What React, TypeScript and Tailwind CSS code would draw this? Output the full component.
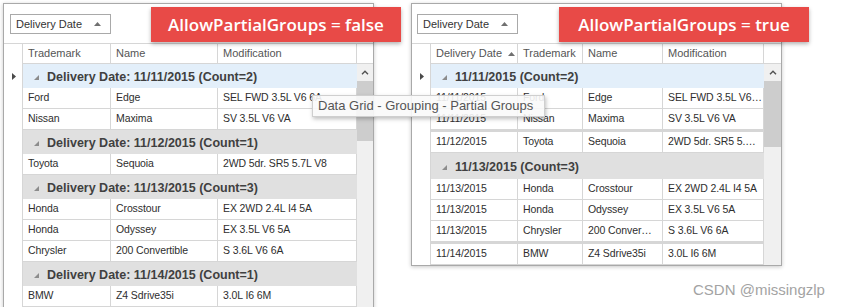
import React from 'react'

type Row = { g?: string; cells?: string[]; focus?: boolean; thick?: boolean; tall?: boolean }

const leftRows: Row[] = [
  { g: 'Delivery Date: 11/11/2015 (Count=2)', focus: true },
  { cells: ['Ford', 'Edge', 'SEL FWD 3.5L V6 6A'] },
  { cells: ['Nissan', 'Maxima', 'SV 3.5L V6 VA'] },
  { g: 'Delivery Date: 11/12/2015 (Count=1)' },
  { cells: ['Toyota', 'Sequoia', '2WD 5dr. SR5 5.7L V8'] },
  { g: 'Delivery Date: 11/13/2015 (Count=3)' },
  { cells: ['Honda', 'Crosstour', 'EX 2WD 2.4L I4 5A'] },
  { cells: ['Honda', 'Odyssey', 'EX 3.5L V6 5A'] },
  { cells: ['Chrysler', '200 Convertible', 'S 3.6L V6 6A'] },
  { g: 'Delivery Date: 11/14/2015 (Count=1)' },
  { cells: ['BMW', 'Z4 Sdrive35i', '3.0L I6 6M'] },
]

const rightRows: Row[] = [
  { g: '11/11/2015 (Count=2)', focus: true },
  { cells: ['11/11/2015', 'Ford', 'Edge', 'SEL FWD 3.5L V6…'] },
  { cells: ['11/11/2015', 'Nissan', 'Maxima', 'SV 3.5L V6 VA'], thick: true },
  { cells: ['11/12/2015', 'Toyota', 'Sequoia', '2WD 5dr. SR5 5.…'] },
  { g: '11/13/2015 (Count=3)', tall: true },
  { cells: ['11/13/2015', 'Honda', 'Crosstour', 'EX 2WD 2.4L I4 5A'] },
  { cells: ['11/13/2015', 'Honda', 'Odyssey', 'EX 3.5L V6 5A'] },
  { cells: ['11/13/2015', 'Chrysler', '200 Conver…', 'S 3.6L V6 6A'], thick: true },
  { cells: ['11/14/2015', 'BMW', 'Z4 Sdrive35i', '3.0L I6 6M'] },
]

const UpTri = () => (
  <svg width="7" height="4" viewBox="0 0 7 4"><polygon points="0,4 3.5,0 7,4" fill="#707070" /></svg>
)

function Grid({ headers, widths, rows, sortFirst, thumb, scrollW, panelCls, ddPad }: {
  headers: string[]; widths: string[]; rows: Row[]; sortFirst?: boolean
  thumb: string; scrollW: string; panelCls: string; ddPad: string
}) {
  return (
    <div className={`flex flex-col border border-[#a9a9a9] bg-white shadow-[0_1px_4px_rgba(0,0,0,0.22)] w-[371px] shrink-0 ${panelCls}`}>
      {/* group panel */}
      <div className={`h-[40px] border-b border-[#d6d6d6] pt-[10px] ${ddPad}`}>
        <div className="w-[101px] h-[20px] border border-[#a9a9a9] flex items-center pl-[5px] pr-[9px] text-[11px] text-[#333]">
          <span>Delivery Date</span>
          <span className="ml-auto"><UpTri /></span>
        </div>
      </div>

      {/* column headers */}
      <div className="flex h-[20px]">
        <div className="w-[19px] border-r border-[#d6d6d6]" />
        <div className="flex flex-1 border-b border-[#d6d6d6]">
          {headers.map((h, i) => (
            <div key={h} className={`${widths[i]} border-r border-[#d6d6d6] pl-[5px] flex items-center text-[11px] text-[#555] whitespace-nowrap`}>
              {h}
              {sortFirst && i === 0 && <span className="ml-[6px] mt-[1px]"><UpTri /></span>}
            </div>
          ))}
          <div className="flex-1" />
        </div>
      </div>

      {/* body */}
      <div className="flex flex-1 min-h-0 overflow-hidden">
        <div className="w-[19px] border-r border-[#d6d6d6] shrink-0">
          <div className="h-[24px] flex items-center justify-center pl-[1px]">
            <svg width="4" height="7" viewBox="0 0 4 7"><polygon points="0,0 4,3.5 0,7" fill="#4a4a4a" /></svg>
          </div>
        </div>
        <div className="flex flex-col">
          {rows.map((r, i) =>
            r.g ? (
              <div key={i} className={`flex items-center pl-[11px] shrink-0 ${r.tall ? 'h-[26px]' : 'h-[24px]'} ${r.focus ? 'bg-[#e3effa]' : 'bg-[#e0e0e0]'}`}>
                <svg width="5" height="5" viewBox="0 0 5 5" className="mt-[2px]"><polygon points="5,0 5,5 0,5" fill="#8c8c8c" /></svg>
                <span className="ml-[8px] pt-[2px] font-bold text-[12.5px] text-[#404040] whitespace-nowrap">{r.g}</span>
              </div>
            ) : (
              <div key={i} className={`flex shrink-0 ${r.thick ? 'h-[23px] border-b-[3px]' : 'h-[21px] border-b'} border-[#d6d6d6]`}>
                {r.cells!.map((c, j) => (
                  <div key={j} className={`${widths[j]} border-r border-[#d6d6d6] pl-[5px] flex items-center text-[10.5px] tracking-[-0.1px] text-[#2e2e2e] whitespace-nowrap overflow-hidden`}>
                    {c}
                  </div>
                ))}
              </div>
            )
          )}
        </div>
        <div className={`${scrollW} flex-1 bg-[#f0f0f0] flex flex-col`}>
          <div className="h-[17px] flex items-center justify-center">
            <svg width="8" height="5" viewBox="0 0 8 5"><path d="M1 4.3 L4 1.3 L7 4.3" stroke="#505050" strokeWidth="1.4" fill="none" /></svg>
          </div>
          <div className={`${thumb} bg-[#cdcdcd]`} />
        </div>
      </div>
    </div>
  )
}

function Banner({ text, cls }: { text: string; cls: string }) {
  return (
    <div className={`absolute top-[7px] w-[250px] h-[35px] bg-[#e84a47] shadow-[0_2px_4px_rgba(0,0,0,0.3)] flex items-center justify-center font-['Open_Sans',sans-serif] font-semibold text-[17px] text-white ${cls}`}>
      {text}
    </div>
  )
}

export default function App() {
  return (
    <div className="relative w-[842px] h-[307px] overflow-hidden bg-white font-['Liberation_Sans',Arial,sans-serif]">
      <div className="flex items-start gap-[37px] pl-[3px] pt-[3px]">
        <Grid
          headers={['Trademark', 'Name', 'Modification']}
          widths={['w-[88px]', 'w-[107px]', 'w-[139px]']}
          rows={leftRows}
          thumb="h-[60px]"
          scrollW="w-[16px]"
          panelCls="h-[330px]"
          ddPad="pl-[6px]"
        />
        <Grid
          headers={['Delivery Date', 'Trademark', 'Name', 'Modification']}
          widths={['w-[87px]', 'w-[65px]', 'w-[80px]', 'w-[101px]']}
          rows={rightRows}
          sortFirst
          thumb="h-[66px]"
          scrollW="w-[17px]"
          panelCls="h-[263px]"
          ddPad="pl-[5px]"
        />
      </div>

      <Banner text="AllowPartialGroups = false" cls="left-[151px]" />
      <Banner text="AllowPartialGroups = true" cls="left-[559px]" />

      <div className="absolute left-[312px] top-[95px] w-[233px] h-[22px] bg-[#fafafa]/90 border border-[#cfcfcf] shadow-[1px_2px_4px_rgba(0,0,0,0.25)] flex items-center pl-[5px] text-[13px] text-[#555] whitespace-nowrap">
        Data Grid - Grouping - Partial Groups
      </div>

      <div className="absolute left-[693px] top-[279px] text-[15px] text-[#a3a3a3] whitespace-nowrap">
        CSDN @missingzlp
      </div>
    </div>
  )
}
